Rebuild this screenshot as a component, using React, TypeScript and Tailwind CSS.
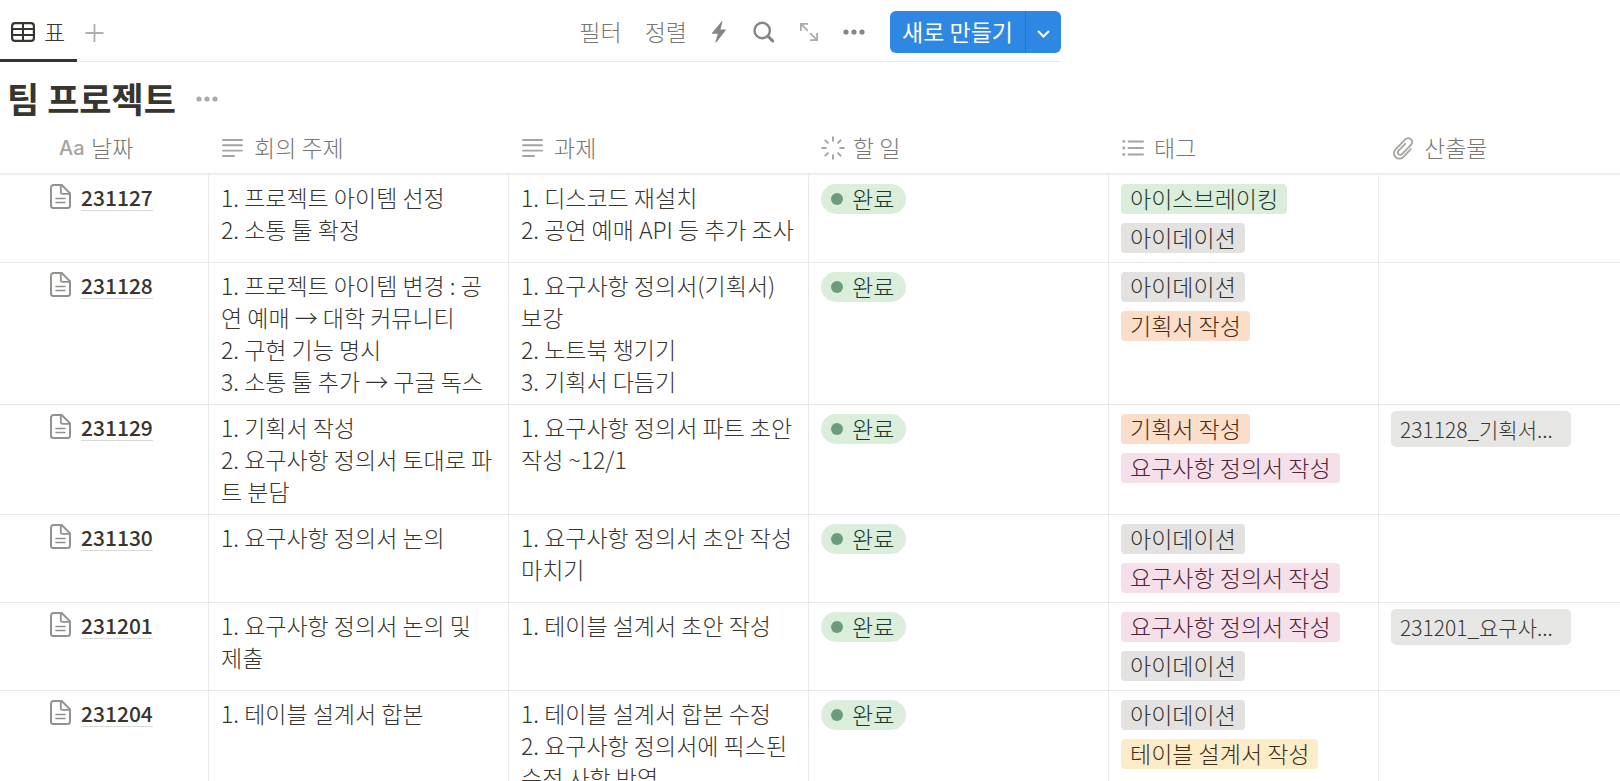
import type { ReactNode } from "react";
import clsx from "clsx";

type TagColor = "green" | "gray" | "orange" | "pink" | "yellow";

interface Tag {
  label: string;
  color: TagColor;
}

interface Meeting {
  date: string;
  topics: string[];
  tasks: string[];
  tags: Tag[];
  file?: string;
}

const TAG_STYLES: Record<TagColor, string> = {
  green: "bg-[#dbeddb] text-[#1c3829]",
  gray: "bg-[#e3e2e0] text-[#32302c]",
  orange: "bg-[#fadec9] text-[#49290e]",
  pink: "bg-[#f5e0e9] text-[#4c2337]",
  yellow: "bg-[#fdecc8] text-[#402c1b]",
};

const ICEBREAKING: Tag = { label: "아이스브레이킹", color: "green" };
const IDEATION: Tag = { label: "아이데이션", color: "gray" };
const PROPOSAL: Tag = { label: "기획서 작성", color: "orange" };
const REQUIREMENTS: Tag = { label: "요구사항 정의서 작성", color: "pink" };
const TABLE_SPEC: Tag = { label: "테이블 설계서 작성", color: "yellow" };

const MEETINGS: Meeting[] = [
  {
    date: "231127",
    topics: ["1. 프로젝트 아이템 선정", "2. 소통 툴 확정"],
    tasks: ["1. 디스코드 재설치", "2. 공연 예매 API 등 추가 조사"],
    tags: [ICEBREAKING, IDEATION],
  },
  {
    date: "231128",
    topics: [
      "1. 프로젝트 아이템 변경 : 공",
      "연 예매 → 대학 커뮤니티",
      "2. 구현 기능 명시",
      "3. 소통 툴 추가 → 구글 독스",
    ],
    tasks: ["1. 요구사항 정의서(기획서)", "보강", "2. 노트북 챙기기", "3. 기획서 다듬기"],
    tags: [IDEATION, PROPOSAL],
  },
  {
    date: "231129",
    topics: ["1. 기획서 작성", "2. 요구사항 정의서 토대로 파", "트 분담"],
    tasks: ["1. 요구사항 정의서 파트 초안", "작성 ~12/1"],
    tags: [PROPOSAL, REQUIREMENTS],
    file: "231128_기획서...",
  },
  {
    date: "231130",
    topics: ["1. 요구사항 정의서 논의"],
    tasks: ["1. 요구사항 정의서 초안 작성", "마치기"],
    tags: [IDEATION, REQUIREMENTS],
  },
  {
    date: "231201",
    topics: ["1. 요구사항 정의서 논의 및", "제출"],
    tasks: ["1. 테이블 설계서 초안 작성"],
    tags: [REQUIREMENTS, IDEATION],
    file: "231201_요구사...",
  },
  {
    date: "231204",
    topics: ["1. 테이블 설계서 합본"],
    tasks: ["1. 테이블 설계서 합본 수정", "2. 요구사항 정의서에 픽스된", "수정 사항 반영"],
    tags: [IDEATION, TABLE_SPEC],
  },
];

/* ── 아이콘 ── */

function TableIcon() {
  return (
    <svg className="h-5 w-6" viewBox="0 0 24 20" fill="none" stroke="currentColor" strokeWidth="2">
      <rect x="1.1" y="1.1" width="21.8" height="17.8" rx="3" strokeWidth="2.2" />
      <path d="M1 7h22M1 13h22M12 1v18" />
    </svg>
  );
}

function PlusIcon() {
  return (
    <svg className="h-5 w-5" viewBox="0 0 20 20" fill="none" stroke="currentColor" strokeWidth="1.8">
      <path d="M9.5 1v18M.5 10h18" />
    </svg>
  );
}

function BoltIcon() {
  return (
    <svg className="h-[22px] w-4" viewBox="0 0 16 22" fill="currentColor">
      <path d="M10.6.6c.3-.6 1-.4.8.3L9.4 8.5h4.8c.6 0 .8.6.4 1L5.4 21.3c-.5.5-1.1.2-.9-.5L6.8 12.8H1.6c-.6 0-.9-.5-.4-1z" />
    </svg>
  );
}

function SearchIcon() {
  return (
    <svg className="h-[22px] w-[22px]" viewBox="0 0 22 22" fill="none" stroke="currentColor" strokeLinecap="round">
      <circle cx="9.2" cy="9.5" r="7.7" strokeWidth="2.4" />
      <path d="M15 15.300l4.600 4.600" strokeWidth="3" />
    </svg>
  );
}

function ExpandIcon() {
  return (
    <svg className="h-5 w-5" viewBox="0 0 20 20" fill="none" stroke="currentColor" strokeWidth="1.8">
      <path d="M1.900 9V1.900H9M1.900 1.900l6.900 6.900M18.100 11v7.100H11M18.100 18.100l-6.900-6.900" />
    </svg>
  );
}

function DotsIcon() {
  return (
    <svg className="h-[6px] w-[22px]" viewBox="0 0 22 6" fill="currentColor">
      <circle cx="3" cy="3" r="2.6" />
      <circle cx="11" cy="3" r="2.6" />
      <circle cx="19" cy="3" r="2.6" />
    </svg>
  );
}

function ChevronIcon() {
  return (
    <svg className="h-2 w-[14px]" viewBox="0 0 14 8" fill="none" stroke="currentColor" strokeWidth="2">
      <path d="M1 1l5.500 5.500L12 1" />
    </svg>
  );
}

function PageIcon() {
  return (
    <svg className="h-[25px] w-[21px] shrink-0" viewBox="0 0 21 25" fill="none" stroke="currentColor">
      <path
        d="M3.5 1h8.200l8.300 8.300V21.500a2.500 2.500 0 0 1-2.500 2.500h-14A2.500 2.500 0 0 1 1 21.500v-18A2.500 2.500 0 0 1 3.500 1z"
        strokeWidth="2"
      />
      <path d="M10.800 1.500v6.800a1.500 1.500 0 0 0 1.500 1.500h7" strokeWidth="1.800" />
      <path d="M6 14.500h9M6 18.500h9" strokeWidth="1.500" strokeLinecap="round" />
    </svg>
  );
}

function TextIcon() {
  return (
    <svg className="h-[18px] w-[21px]" viewBox="0 0 21 18" stroke="currentColor" strokeWidth="1.900" strokeLinecap="round">
      <path d="M1 1h19M1 6.300h19M1 11.600h19M1 17h11" />
    </svg>
  );
}

function StatusIcon() {
  return (
    <svg className="h-6 w-6" viewBox="0 0 24 24" stroke="currentColor" strokeWidth="2" strokeLinecap="round">
      <path d="M12 1.200v3.600M12 19.200v3.600M1.200 12h3.600M19.200 12h3.600M4.400 4.400l2.500 2.500M17.100 17.100l2.500 2.500M19.600 4.400l-2.500 2.500M6.900 17.100l-2.500 2.500" />
    </svg>
  );
}

function ListIcon() {
  return (
    <svg className="h-[18px] w-[22px]" viewBox="0 0 22 18" stroke="currentColor" strokeLinecap="round">
      <path d="M6.500 2.500h14.500M6.500 9h14.500M6.500 15.500h14.500" strokeWidth="1.900" />
      <path d="M1.800 2.500h.01M1.800 9h.01M1.800 15.500h.01" strokeWidth="2.900" />
    </svg>
  );
}

function ClipIcon() {
  return (
    <svg
      className="h-6 w-[22px]"
      viewBox="0 0 22 24"
      fill="none"
      stroke="currentColor"
      strokeWidth="1.800"
      strokeLinecap="round"
      strokeLinejoin="round"
    >
      <path d="M18.800 13.200l-7.600 7.900a5.300 5.300 0 0 1-7.600 0c-2.200-2.200-2.200-5.500 0-7.700L13.300 3.300a3.900 3.900 0 0 1 5.700 0c1.500 1.600 1.500 4 0 5.600L10 18.200a2.300 2.300 0 0 1-3.400 0c-1-1-1-2.500 0-3.500l6.700-6.900" />
    </svg>
  );
}

/* ── 표 구성 요소 ── */

function ColumnHead({ icon, children, className }: { icon: ReactNode; children: ReactNode; className?: string }) {
  return (
    <th scope="col" className={clsx("h-[52px] border-b-2 border-[#ededec] p-0 text-left font-light", className)}>
      <div className="flex items-center whitespace-nowrap">
        <span className="flex w-8 shrink-0 items-center text-[#a5a4a1]">{icon}</span>
        <span className="pb-0.5 text-[#787774]">{children}</span>
      </div>
    </th>
  );
}

function TextCell({ lines }: { lines: string[] }) {
  return (
    <td className="border-r border-b border-[#e9e9e7] px-3 pt-[6px] pb-[7px] leading-8 whitespace-pre">
      {lines.join("\n")}
    </td>
  );
}

function MeetingRow({ meeting }: { meeting: Meeting }) {
  return (
    <tr className="align-top">
      <td className="border-r border-b border-[#e9e9e7] pt-[9px] pl-[50px]">
        <a href="#page" className="flex items-start gap-[10px]">
          <span className="text-[#91918e]">
            <PageIcon />
          </span>
          <span className="border-b border-[#d9d9d7] text-[21px] leading-[26px] font-medium">{meeting.date}</span>
        </a>
      </td>
      <TextCell lines={meeting.topics} />
      <TextCell lines={meeting.tasks} />
      <td className="border-r border-b border-[#e9e9e7] px-3 py-[9px]">
        <span className="flex h-[30px] w-fit items-center gap-[9px] rounded-full bg-[#dbeddb] pr-3 pl-[10px] text-[#1c3829]">
          <span className="size-3 rounded-full bg-[#6c9b7d]" />
          <span className="pb-0.5">완료</span>
        </span>
      </td>
      <td className="border-r border-b border-[#e9e9e7] px-3 py-[9px]">
        <div className="flex flex-col items-start gap-[9px]">
          {meeting.tags.map((tag) => (
            <span
              key={tag.label}
              className={clsx(
                "flex h-[30px] items-center rounded-[4px] px-[9px] pb-0.5 whitespace-nowrap",
                TAG_STYLES[tag.color],
              )}
            >
              {tag.label}
            </span>
          ))}
        </div>
      </td>
      <td className="border-b border-[#e9e9e7] px-3 py-[6px]">
        {meeting.file && (
          <a
            href="#file"
            className="flex h-9 w-[180px] items-center rounded-[5px] bg-[#e6e6e4] px-[9px] text-[21px] whitespace-nowrap"
          >
            {meeting.file}
          </a>
        )}
      </td>
    </tr>
  );
}

export default function App() {
  return (
    <div className="h-screen overflow-hidden bg-white font-['Noto_Sans_CJK_KR',sans-serif] text-[23px] leading-[30px] font-light text-[#37352f]">
      {/* 보기 탭 + 도구 모음 */}
      <header className="flex h-[62px] max-w-[1061px] justify-between border-b border-[#e9e9e7]">
        <nav className="flex">
          <button className="-mb-px flex w-[77px] items-center gap-[9px] border-b-3 border-[#37352f] pt-[5px] pl-[11px]">
            <TableIcon />
            <span className="pb-0.5">표</span>
          </button>
          <button aria-label="보기 추가" className="px-2 pt-1 text-[#b0afac]">
            <PlusIcon />
          </button>
        </nav>

        <div className="flex items-center pt-[3px] text-[#868581]">
          <button className="mr-[23px] pb-0.5 text-[#787774]">필터</button>
          <button className="mr-6 pb-0.5 text-[#787774]">정렬</button>
          <button aria-label="자동화" className="mr-[26px]">
            <BoltIcon />
          </button>
          <button aria-label="검색" className="mr-6">
            <SearchIcon />
          </button>
          <button aria-label="확장" className="mr-6 text-[#adaca9]">
            <ExpandIcon />
          </button>
          <button aria-label="더 보기" className="mr-[25px]">
            <DotsIcon />
          </button>
          <div className="flex h-[42px] overflow-hidden rounded-[6px] bg-[#2d87e3] text-white">
            <button className="w-[135px] pb-0.5 font-normal">새로 만들기</button>
            <button
              aria-label="템플릿 선택"
              className="flex w-9 items-center justify-center border-l border-[#2577cb] pt-1"
            >
              <ChevronIcon />
            </button>
          </div>
        </div>
      </header>

      {/* 제목 */}
      <div className="flex h-[61px] items-center gap-5 pt-3 pl-[7px]">
        <h1 className="pb-0.5 text-[35px] font-bold">팀 프로젝트</h1>
        <button aria-label="데이터베이스 메뉴" className="text-[#acaba9]">
          <DotsIcon />
        </button>
      </div>

      <table className="w-full table-fixed border-separate border-spacing-0">
        <thead>
          <tr>
            <ColumnHead
              className="w-[209px] pl-[59px]"
              icon={<span className="font-['Inter','Noto_Sans_CJK_KR',sans-serif] text-[20px] font-medium">Aa</span>}
            >
              날짜
            </ColumnHead>
            <ColumnHead className="w-[300px] pl-[13px]" icon={<TextIcon />}>
              회의 주제
            </ColumnHead>
            <ColumnHead className="w-[300px] pl-[13px]" icon={<TextIcon />}>
              과제
            </ColumnHead>
            <ColumnHead className="w-[300px] pl-3" icon={<StatusIcon />}>
              할 일
            </ColumnHead>
            <ColumnHead className="w-[270px] pl-[13px]" icon={<ListIcon />}>
              태그
            </ColumnHead>
            <ColumnHead className="pl-[13px]" icon={<ClipIcon />}>
              산출물
            </ColumnHead>
          </tr>
        </thead>
        <tbody>
          {MEETINGS.map((meeting) => (
            <MeetingRow key={meeting.date} meeting={meeting} />
          ))}
        </tbody>
      </table>
    </div>
  );
}
